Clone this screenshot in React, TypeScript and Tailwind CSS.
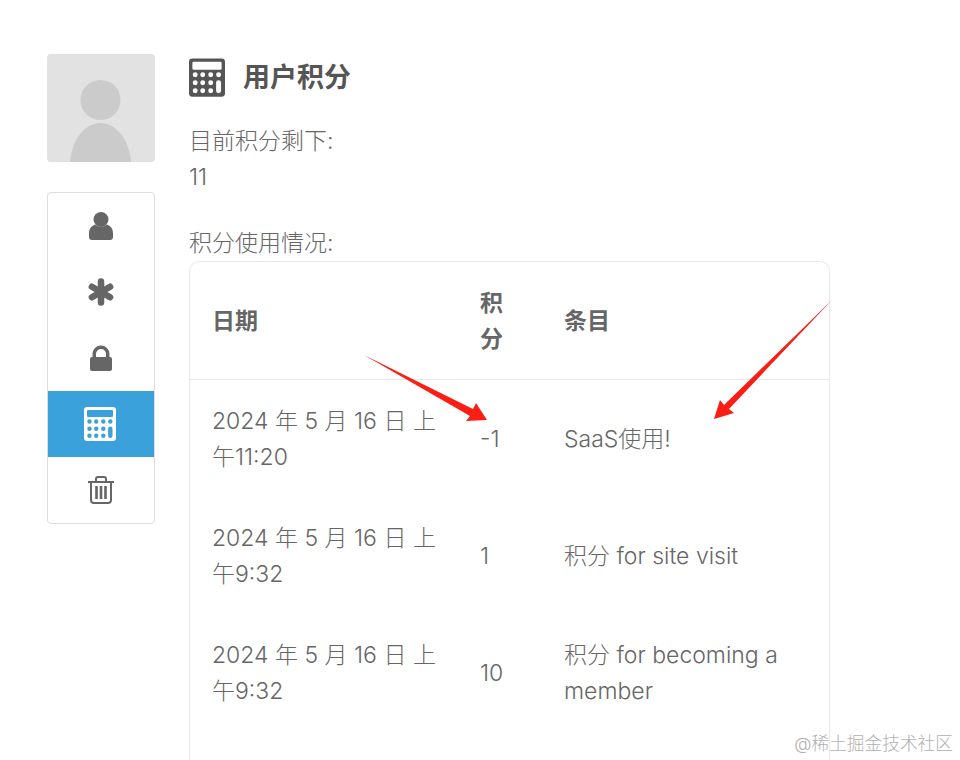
// App.tsx
// Página de puntos de usuario (用户积分)

const rows = [
  { date: '2024 年 5 月 16 日 上午11:20', score: '-1', item: 'SaaS使用!' },
  { date: '2024 年 5 月 16 日 上午9:32', score: '1', item: '积分 for site visit' },
  { date: '2024 年 5 月 16 日 上午9:32', score: '10', item: '积分 for becoming a member' },
]

function UserIcon() {
  return (
    <svg width="24" height="28" viewBox="0 0 24 28" fill="currentColor">
      <circle cx="12" cy="7.500" r="7.500" />
      <path d="M0 21c0-4 2-7 6-8.500 2 1.500 4 2.500 6 2.500s4-1 6-2.500c4 1.500 6 4.500 6 8.500v4c0 2-1 3-3 3H3c-2 0-3-1-3-3z" />
    </svg>
  )
}

function AsteriskIcon() {
  return (
    <svg width="28" height="28" viewBox="0 0 28 28" stroke="currentColor" strokeWidth="6.500" strokeLinecap="round">
      <path d="M14 3.500v21M4.900 8.750l18.200 10.500M23.100 8.750L4.900 19.250" />
    </svg>
  )
}

function LockIcon() {
  return (
    <svg width="22" height="26" viewBox="0 0 22 26" fill="currentColor">
      <path d="M2.500 13V9a8.500 8.500 0 0 1 17 0v4H16V9a5 5 0 0 0-10 0v4z" />
      <rect x="0" y="12" width="22" height="14" rx="2" />
    </svg>
  )
}

function TrashIcon() {
  return (
    <svg width="26" height="28" viewBox="0 0 26 28" fill="none" stroke="currentColor" strokeWidth="2">
      <path d="M0 6h26M8 6V3c0-1 1-2 2-2h6c1 0 2 1 2 2v3" />
      <path d="M3 6v18c0 2 1 3 3 3h14c2 0 3-1 3-3V6" />
      <path d="M8.500 10v13M13 10v13M17.500 10v13" strokeWidth="2.600" />
    </svg>
  )
}

function CalcIcon({ hole, width, height }: { hole: string; width: number; height: number }) {
  const xs = [5.500, 12.200, 19.300]
  const ys = [14.500, 21.700, 28.700]
  return (
    <svg width={width} height={height} viewBox="0 0 32 34">
      <rect width="32" height="34" rx="3" fill="currentColor" />
      <rect x="3" y="3" width="26" height="7" rx="1" fill={hole} />
      {ys.map((y) => xs.map((x) => <circle key={`${x}-${y}`} cx={x} cy={y} r="2.200" fill={hole} />))}
      <circle cx="26.300" cy="14.500" r="2.200" fill={hole} />
      <rect x="24.100" y="19.500" width="4.400" height="11.500" rx="2.200" fill={hole} />
    </svg>
  )
}

function Arrows() {
  return (
    <svg className="absolute left-0 top-0" width="960" height="760" viewBox="0 0 960 760">
      <polygon points="364,355 473,409 476,403 487,420 466,421 470,416" fill="#fa1e14" />
      <polygon points="832,300 729,409 734,413 714,419 720,400 724,405" fill="#fa1e14" />
    </svg>
  )
}

export default function App() {
  return (
    <div className="relative h-[760px] w-[960px] overflow-hidden bg-white font-['Inter','Noto_Sans_CJK_SC',sans-serif] text-[23px] font-light leading-9 text-[#666666]">
      <div className="flex gap-[34px] pl-[47px] pt-[54px]">
        {/* Sidebar */}
        <div className="w-[108px] shrink-0">
          <div className="h-[108px] w-[108px] overflow-hidden rounded-[4px] bg-[#e2e2e2]">
            <svg width="108" height="108" viewBox="0 0 108 108" fill="#cbcbcb">
              <circle cx="53.500" cy="46" r="20" />
              <path d="M23 108C25 85 38 69 53.500 69S82 85 84 108z" />
            </svg>
          </div>
          <div className="mt-[30px] overflow-hidden rounded-[4px] border border-[#dddddd]">
            <div className="flex h-[66px] items-center justify-center"><UserIcon /></div>
            <div className="flex h-[66px] items-center justify-center"><AsteriskIcon /></div>
            <div className="flex h-[66px] items-center justify-center"><LockIcon /></div>
            <div className="flex h-[66px] items-center justify-center bg-[#3ba1da] pr-[2px] text-white">
              <CalcIcon hole="#3ba1da" width={32} height={34} />
            </div>
            <div className="flex h-[66px] items-center justify-center"><TrashIcon /></div>
          </div>
        </div>

        {/* Contenido */}
        <main className="w-[641px] shrink-0">
          <div className="flex h-[46px] items-center gap-[18px] text-[#555555]">
            <CalcIcon hole="#ffffff" width={36} height={39} />
            <h1 className="pt-[2px] text-[27px] font-bold">用户积分</h1>
          </div>
          <p className="mt-[23px]">目前积分剩下:</p>
          <p>11</p>
          <p className="mt-[30px]">积分使用情况:</p>
          <div className="rounded-t-[10px] border border-[#e8e8e8]">
            <table className="w-full table-fixed border-collapse text-left">
              <thead>
                <tr className="border-b border-[#e8e8e8]">
                  <th className="w-[266px] py-[22.500px] pl-[22px] pr-3 font-bold">日期</th>
                  <th className="w-[84px] px-6 py-[22.500px] font-bold">积分</th>
                  <th className="px-6 py-[22.500px] font-bold">条目</th>
                </tr>
              </thead>
              <tbody>
                {rows.map((row) => (
                  <tr key={row.date + row.score}>
                    <td className="py-[22.500px] pl-[22px] pr-3">{row.date}</td>
                    <td className="px-6 py-[22.500px]">{row.score}</td>
                    <td className="px-6 py-[22.500px]">{row.item}</td>
                  </tr>
                ))}
                <tr>
                  <td className="h-[60px]" colSpan={3}></td>
                </tr>
              </tbody>
            </table>
          </div>
        </main>
      </div>

      <Arrows />
      <div className="absolute right-[7px] top-[733px] text-[17.700px] leading-[22px] text-[#b0b0b0]">@稀土掘金技术社区</div>
    </div>
  )
}
